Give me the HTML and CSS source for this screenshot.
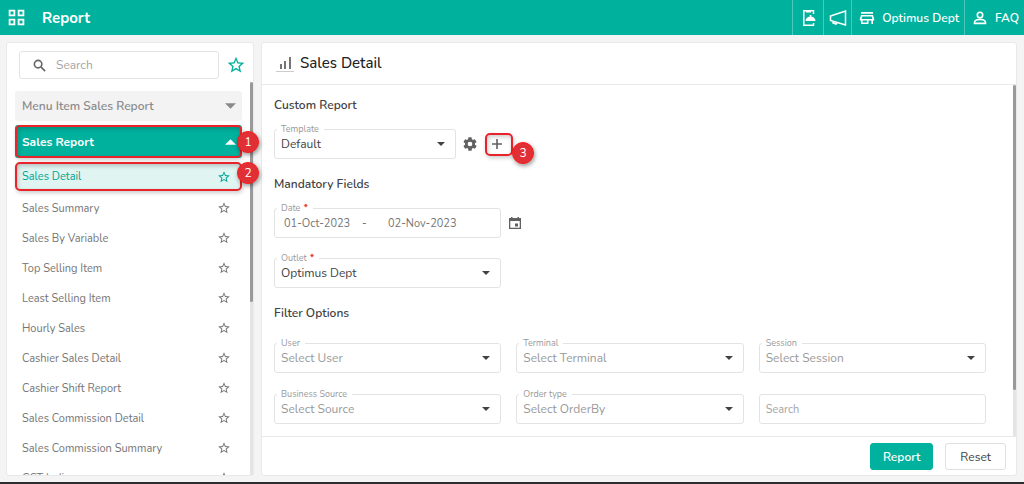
FILE: index.html
```html
<!DOCTYPE html>
<html lang="en">
<head>
    <meta charset="UTF-8">
    <meta name="viewport" content="width=device-width, initial-scale=1.0">
    <title>Report - Sales Detail</title>
    <link rel="stylesheet" href="styles.css">
</head>
<body>
    <!-- Shared icons -->
    <svg class="sprite" aria-hidden="true">
        <symbol id="star" viewBox="0 0 24 24">
            <path fill="currentColor" d="M22 9.240l-7.190-.62L12 2 9.190 8.630 2 9.240l5.460 4.730L5.820 21 12 17.270 18.180 21l-1.630-7.030zM12 15.400l-3.760 2.270 1-4.280-3.320-2.880 4.380-.38L12 6.100l1.710 4.040 4.380.38-3.320 2.880 1 4.280z"/>
        </symbol>
        <symbol id="caret" viewBox="0 0 10 5">
            <path d="M0 0h10L5 5z" fill="currentColor"/>
        </symbol>
    </svg>

    <header class="topbar">
        <button class="apps" aria-label="Apps">
            <svg viewBox="0 0 16 16" fill="none" stroke="currentColor" stroke-width="1.700"><path d="M1.500 1.500h4.500v4.500h-4.500zM10 1.500h4.500v4.500h-4.500zM1.500 10h4.500v4.500h-4.500zM10 10h4.500v4.500h-4.500z"/></svg>
        </button>
        <h1>Report</h1>
        <nav class="topnav">
            <a class="nav-order" href="#" aria-label="Room service">
                <svg viewBox="0 0 18 20" fill="none" stroke="currentColor" stroke-width="1.500"><path d="M13.500 6V2.800H3.800v14.400h9.700V15"/><path d="M6 2.500h5v2H6zM5.500 13a5 4.500 0 0 1 10 0zM9.700 7h1.700v2H9.700z" fill="currentColor" stroke="none"/></svg>
            </a>
            <a class="nav-news" href="#" aria-label="Announcements">
                <svg viewBox="0 0 18 20" fill="none" stroke="currentColor" stroke-width="1.500"><path d="M1.500 8L16.500 3v14L1.500 12.500zM4 13.500v1.500l3 1 1-1.500"/></svg>
            </a>
            <a class="nav-outlet" href="#">
                <svg viewBox="0 0 16 16" fill="currentColor"><path d="M2 2h12v1.700H2zM2 5h12l1.200 4v1.600H14V14h-1.600v-3.400H9.500V14H2v-3.400H.8V9zM3.300 6.600l-.7 2.400h10.800l-.7-2.400zM3.600 10.600v1.800h4.300v-1.800z" fill-rule="evenodd"/></svg>
                Optimus Dept
            </a>
            <a class="nav-faq" href="#">
                <svg viewBox="0 0 16 16" fill="none" stroke="currentColor" stroke-width="1.600"><circle cx="8" cy="5" r="2.700"/><path d="M2.500 13.400v-1.200c0-2 3.500-2.800 5.500-2.800s5.500.8 5.500 2.800v1.200z"/></svg>
                FAQ
            </a>
        </nav>
    </header>

    <div class="page">
        <aside class="sidebar">
            <div class="search-row">
                <label class="search-box">
                    <svg viewBox="0 0 16 16" fill="none" stroke="currentColor" stroke-width="1.700"><circle cx="6.500" cy="6.500" r="4"/><path d="M9.500 9.500l4.500 4.500"/></svg>
                    <input type="search" placeholder="Search" aria-label="Search reports">
                </label>
                <button class="fav" aria-label="Favourites"><svg><use href="#star"/></svg></button>
            </div>

            <div class="scroll-area">
                <div class="menu">
                    <button class="group">Menu Item Sales Report <svg><use href="#caret"/></svg></button>
                    <div class="marked">
                        <button class="group open">Sales Report <svg><use href="#caret"/></svg></button>
                        <span class="badge">1</span>
                    </div>
                    <ul class="reports">
                        <li class="marked active">
                            <a href="#">Sales Detail <svg><use href="#star"/></svg></a>
                            <span class="badge">2</span>
                        </li>
                        <li><a href="#">Sales Summary <svg><use href="#star"/></svg></a></li>
                        <li><a href="#">Sales By Variable <svg><use href="#star"/></svg></a></li>
                        <li><a href="#">Top Selling Item <svg><use href="#star"/></svg></a></li>
                        <li><a href="#">Least Selling Item <svg><use href="#star"/></svg></a></li>
                        <li><a href="#">Hourly Sales <svg><use href="#star"/></svg></a></li>
                        <li><a href="#">Cashier Sales Detail <svg><use href="#star"/></svg></a></li>
                        <li><a href="#">Cashier Shift Report <svg><use href="#star"/></svg></a></li>
                        <li><a href="#">Sales Commission Detail <svg><use href="#star"/></svg></a></li>
                        <li><a href="#">Sales Commission Summary <svg><use href="#star"/></svg></a></li>
                        <li><a href="#">GST Indian <svg><use href="#star"/></svg></a></li>
                    </ul>
                </div>
                <div class="track"><div class="thumb"></div></div>
            </div>
        </aside>

        <main class="content">
            <div class="title">
                <svg viewBox="0 0 18 20"><path d="M4 11h2v5H4zM8 8h2v8H8zM13 4h2v12h-2z" fill="#757575"/><path d="M0 18.500h18" stroke="#ccc"/></svg>
                <h2>Sales Detail</h2>
            </div>

            <div class="scroll-area">
                <form class="fields" id="reportForm">
                    <h3>Custom Report</h3>
                    <div class="line">
                        <div class="field template">
                            <label for="template">Template</label>
                            <select id="template"><option>Default</option></select>
                            <svg><use href="#caret"/></svg>
                        </div>
                        <button type="button" class="icon-btn gear" aria-label="Template settings">
                            <svg viewBox="0 0 24 24" fill="currentColor"><path fill-rule="evenodd" d="M19.400 13a7.500 7.500 0 0 0 0-2l2.100-1.700a.5.5 0 0 0 .1-.6l-2-3.500a.5.5 0 0 0-.6-.2l-2.500 1a7.300 7.300 0 0 0-1.700-1l-.4-2.600A.5.5 0 0 0 14 2h-4a.5.5 0 0 0-.5.400L9.200 5a7.700 7.700 0 0 0-1.700 1L5 5a.5.5 0 0 0-.6.200l-2 3.500a.5.5 0 0 0 .1.600L4.600 11a7.500 7.500 0 0 0 0 2l-2.100 1.700a.5.5 0 0 0-.1.600l2 3.500c.1.200.4.300.6.200l2.500-1c.5.400 1.100.7 1.700 1l.3 2.600c0 .2.300.4.500.4h4c.2 0 .5-.2.500-.4l.4-2.600c.6-.3 1.200-.6 1.700-1l2.500 1c.2.100.5 0 .6-.2l2-3.500a.5.5 0 0 0-.1-.6zM12 15.500a3.500 3.500 0 1 1 0-7 3.500 3.500 0 0 1 0 7z"/></svg>
                        </button>
                        <div class="marked add">
                            <button type="button" class="icon-btn" aria-label="Add template">
                                <svg viewBox="0 0 14 14"><path d="M7 2v10M2 7h10" stroke="currentColor" stroke-width="1.600"/></svg>
                            </button>
                            <span class="badge">3</span>
                        </div>
                    </div>

                    <h3>Mandatory Fields</h3>
                    <div class="line">
                        <div class="field dates">
                            <label for="dateFrom">Date <b>*</b></label>
                            <input type="text" id="dateFrom" value="01-Oct-2023">
                            <span>-</span>
                            <input type="text" value="02-Nov-2023" aria-label="Date to">
                        </div>
                        <button type="button" class="icon-btn" aria-label="Open calendar">
                            <svg viewBox="0 0 14 14"><path fill="currentColor" fill-rule="evenodd" d="M3 1h1.500v1h5V1H11v1h2v11H1V2h2zM2.300 5v6.700h9.400V5zM7 7.500h3v3H7z"/></svg>
                        </button>
                    </div>
                    <div class="line">
                        <div class="field">
                            <label for="outlet">Outlet <b>*</b></label>
                            <select id="outlet"><option>Optimus Dept</option></select>
                            <svg><use href="#caret"/></svg>
                        </div>
                    </div>

                    <h3 class="filter-title">Filter Options</h3>
                    <div class="filters">
                        <div class="field empty">
                            <label for="user">User</label>
                            <select id="user"><option>Select User</option></select>
                            <svg><use href="#caret"/></svg>
                        </div>
                        <div class="field empty">
                            <label for="terminal">Terminal</label>
                            <select id="terminal"><option>Select Terminal</option></select>
                            <svg><use href="#caret"/></svg>
                        </div>
                        <div class="field empty">
                            <label for="session">Session</label>
                            <select id="session"><option>Select Session</option></select>
                            <svg><use href="#caret"/></svg>
                        </div>
                        <div class="field empty">
                            <label for="source">Business Source</label>
                            <select id="source"><option>Select Source</option></select>
                            <svg><use href="#caret"/></svg>
                        </div>
                        <div class="field empty">
                            <label for="orderType">Order type</label>
                            <select id="orderType"><option>Select OrderBy</option></select>
                            <svg><use href="#caret"/></svg>
                        </div>
                        <div class="field">
                            <input type="text" placeholder="Search" aria-label="Search">
                        </div>
                    </div>
                </form>
                <div class="track"><div class="thumb"></div></div>
            </div>

            <div class="actions">
                <button type="submit" form="reportForm" class="btn primary">Report</button>
                <button type="reset" form="reportForm" class="btn">Reset</button>
            </div>
        </main>
    </div>
</body>
</html>
```
FILE: styles.css
```css
* {
    box-sizing: border-box;
}
body {
    margin: 0;
    height: 100vh;
    display: flex;
    flex-direction: column;
    background: #f4f4f4;
    border-bottom: 2px solid #2b2b30;
    font-family: Nunito, Lato, sans-serif;
    font-size: 12px;
    color: #424242;
}
h1, h2, h3, ul {
    margin: 0;
    padding: 0;
}
button, input, select {
    font: inherit;
    color: inherit;
    border: 0;
    padding: 0;
    margin: 0;
    background: none;
}
input, select {
    min-width: 0;
    width: 100%;
    outline: 0;
}
a {
    color: inherit;
    text-decoration: none;
}
svg {
    display: block;
    flex: none;
}
::placeholder {
    color: #a5a5a5;
    opacity: 1;
}
.sprite {
    display: none;
}

/* Top bar */
.topbar {
    height: 35px;
    flex: none;
    display: flex;
    align-items: center;
    padding-left: 8px;
    background: #00b19d;
    color: #fff;
}
.apps svg {
    width: 17px;
    height: 17px;
}
.topbar h1 {
    margin-left: 17px;
    font-size: 15px;
    font-weight: 700;
}
.topnav {
    margin-left: auto;
    height: 100%;
    display: flex;
}
.topnav a {
    display: flex;
    align-items: center;
    gap: 7px;
    padding: 0 5px 0 7px;
    border-left: 1px solid #4dc8ba;
    font-weight: 600;
}
.topnav svg {
    width: 16px;
    height: 16px;
}
.topnav .nav-order svg,
.topnav .nav-news svg {
    width: 18px;
    height: 20px;
}
.topnav .nav-news {
    padding: 0 4px 0 5px;
}

/* Page layout */
.page {
    flex: 1;
    min-height: 0;
    display: flex;
    gap: 7px;
    padding: 7px 7px 6px 6px;
}
.sidebar, .content {
    display: flex;
    flex-direction: column;
    background: #fff;
    border: 1px solid #e9e9e9;
    border-radius: 3px;
}
.sidebar {
    flex: 0 0 248px;
}
.content {
    flex: 1;
    min-width: 0;
}
.scroll-area {
    flex: 1;
    min-height: 0;
    display: flex;
}
.track {
    flex: 0 0 3px;
    background: #e4e4e4;
}
.thumb {
    background: #999;
    border-radius: 2px;
}
.sidebar .thumb {
    height: 56%;
}
.content .thumb {
    height: 87%;
}

/* Sidebar */
.search-row {
    display: flex;
    align-items: center;
    gap: 7px;
    padding: 8px 7px 3px 12px;
}
.search-box {
    flex: 1;
    height: 28px;
    display: flex;
    align-items: center;
    gap: 9px;
    padding-left: 12px;
    border: 1px solid #e3e3e3;
    border-radius: 3px;
}
.search-box svg {
    width: 15px;
    height: 15px;
    color: #666;
}
.fav svg {
    width: 20px;
    height: 20px;
    color: #00b19d;
}
.menu {
    flex: 1;
    min-width: 0;
    padding: 9px 8px 0;
    overflow-x: visible;
    overflow-y: clip;
}
.group {
    width: 100%;
    height: 30px;
    display: flex;
    align-items: center;
    justify-content: space-between;
    padding: 0 6px 0 7px;
    background: #f3f3f3;
    border-radius: 3px;
    color: #8a8a8a;
    font-weight: 600;
}
.group svg {
    width: 11px;
    height: 6px;
}
.group.open {
    height: 100%;
    background: #00b19d;
    color: #fff;
    font-weight: 700;
}
.group.open svg {
    transform: rotate(180deg);
}
.menu > .marked {
    height: 33px;
    margin: 4px 0;
}
.reports {
    list-style: none;
    font-size: 11px;
    color: #757575;
}
.reports a {
    height: 30px;
    display: flex;
    align-items: center;
    justify-content: space-between;
    padding: 0 11px 0 7px;
}
.reports svg {
    width: 14px;
    height: 14px;
}
.reports .active {
    margin-bottom: 2px;
    background: #e0f4f2;
    color: #00a491;
}
.reports .active a {
    height: 29px;
}

/* Red callout frames with a number */
.marked {
    position: relative;
    border-radius: 5px;
}
.marked::after {
    content: "";
    position: absolute;
    inset: 0;
    border: 2px solid #e8232a;
    border-radius: 5px;
    box-shadow: 1px 2px 4px rgba(0, 0, 0, 0.2), inset 1px 2px 4px rgba(0, 0, 0, 0.2);
    pointer-events: none;
}
.badge {
    position: absolute;
    z-index: 1;
    top: 50%;
    right: -17px;
    width: 22px;
    height: 22px;
    margin-top: -11px;
    border: 1px solid #ff1a1a;
    border-radius: 50%;
    background: #e03036;
    box-shadow: 1px 2px 4px rgba(0, 0, 0, 0.4);
    color: #fff;
    font-size: 12px;
    line-height: 20px;
    text-align: center;
}
.reports .badge {
    top: 11px;
}

/* Report form */
.title {
    height: 42px;
    flex: none;
    display: flex;
    align-items: center;
    gap: 6px;
    padding: 0 14px 2px;
    border-bottom: 1px solid #e9e9e9;
}
.title svg {
    width: 18px;
    height: 20px;
}
.title h2 {
    font-size: 15px;
    font-weight: 500;
    color: #212121;
}
.fields {
    flex: 1;
    min-width: 0;
    overflow: hidden;
    padding: 10px 27px 0 12px;
}
.fields h3 {
    margin-bottom: 14px;
    font-size: 12px;
    line-height: 20px;
    font-weight: 600;
}
.fields .filter-title {
    margin-bottom: 20px;
}
.line {
    display: flex;
    align-items: center;
    margin-bottom: 15px;
}
.line + .line {
    margin-top: 20px;
}
.field {
    position: relative;
    height: 30px;
    display: flex;
    align-items: center;
    padding: 0 10px 0 6px;
    border: 1px solid #e3e3e3;
    border-radius: 3px;
}
.line .field {
    flex: 0 0 calc((100% - 30px) / 3);
}
.line .template {
    flex-basis: 182px;
}
.field label {
    position: absolute;
    top: -8px;
    left: 2px;
    padding: 0 5px 0 4px;
    background: #fff;
    color: #999;
    font-size: 9px;
    line-height: 14px;
}
.field label b {
    margin-left: 1px;
    color: #e53935;
}
.field select {
    appearance: none;
    height: 28px;
}
.field svg {
    width: 8px;
    height: 4px;
    pointer-events: none;
}
.field.empty select {
    color: #999;
}
.field.dates {
    padding-left: 9px;
    color: #757575;
    font-size: 11px;
}
.dates input {
    width: 78px;
}
.dates span {
    width: 26px;
}
.icon-btn {
    display: flex;
    align-items: center;
    justify-content: center;
    margin-left: 7px;
    color: #616161;
}
.icon-btn svg {
    width: 14px;
    height: 14px;
}
.gear svg {
    width: 16px;
    height: 16px;
}
.gear {
    margin-left: 6px;
}
.add {
    margin-left: 7px;
}
.add .icon-btn {
    width: 28px;
    height: 23px;
    margin: 0;
    padding-right: 4px;
}
.add .badge {
    top: 20px;
    right: -21px;
}
.filters {
    display: grid;
    grid-template-columns: repeat(3, 1fr);
    gap: 21px 15px;
}
.filters input {
    font-size: 11px;
}

/* Footer buttons */
.actions {
    flex: none;
    display: flex;
    justify-content: flex-end;
    gap: 12px;
    padding: 6px 10px 5px;
    border-top: 1px solid #e9e9e9;
}
.btn {
    height: 27px;
    padding: 0 14px;
    border: 1px solid #e0e0e0;
    border-radius: 3px;
}
.btn.primary {
    padding: 0 12px;
    background: #00b19d;
    border-color: #00b19d;
    color: #fff;
    font-weight: 600;
}
```
